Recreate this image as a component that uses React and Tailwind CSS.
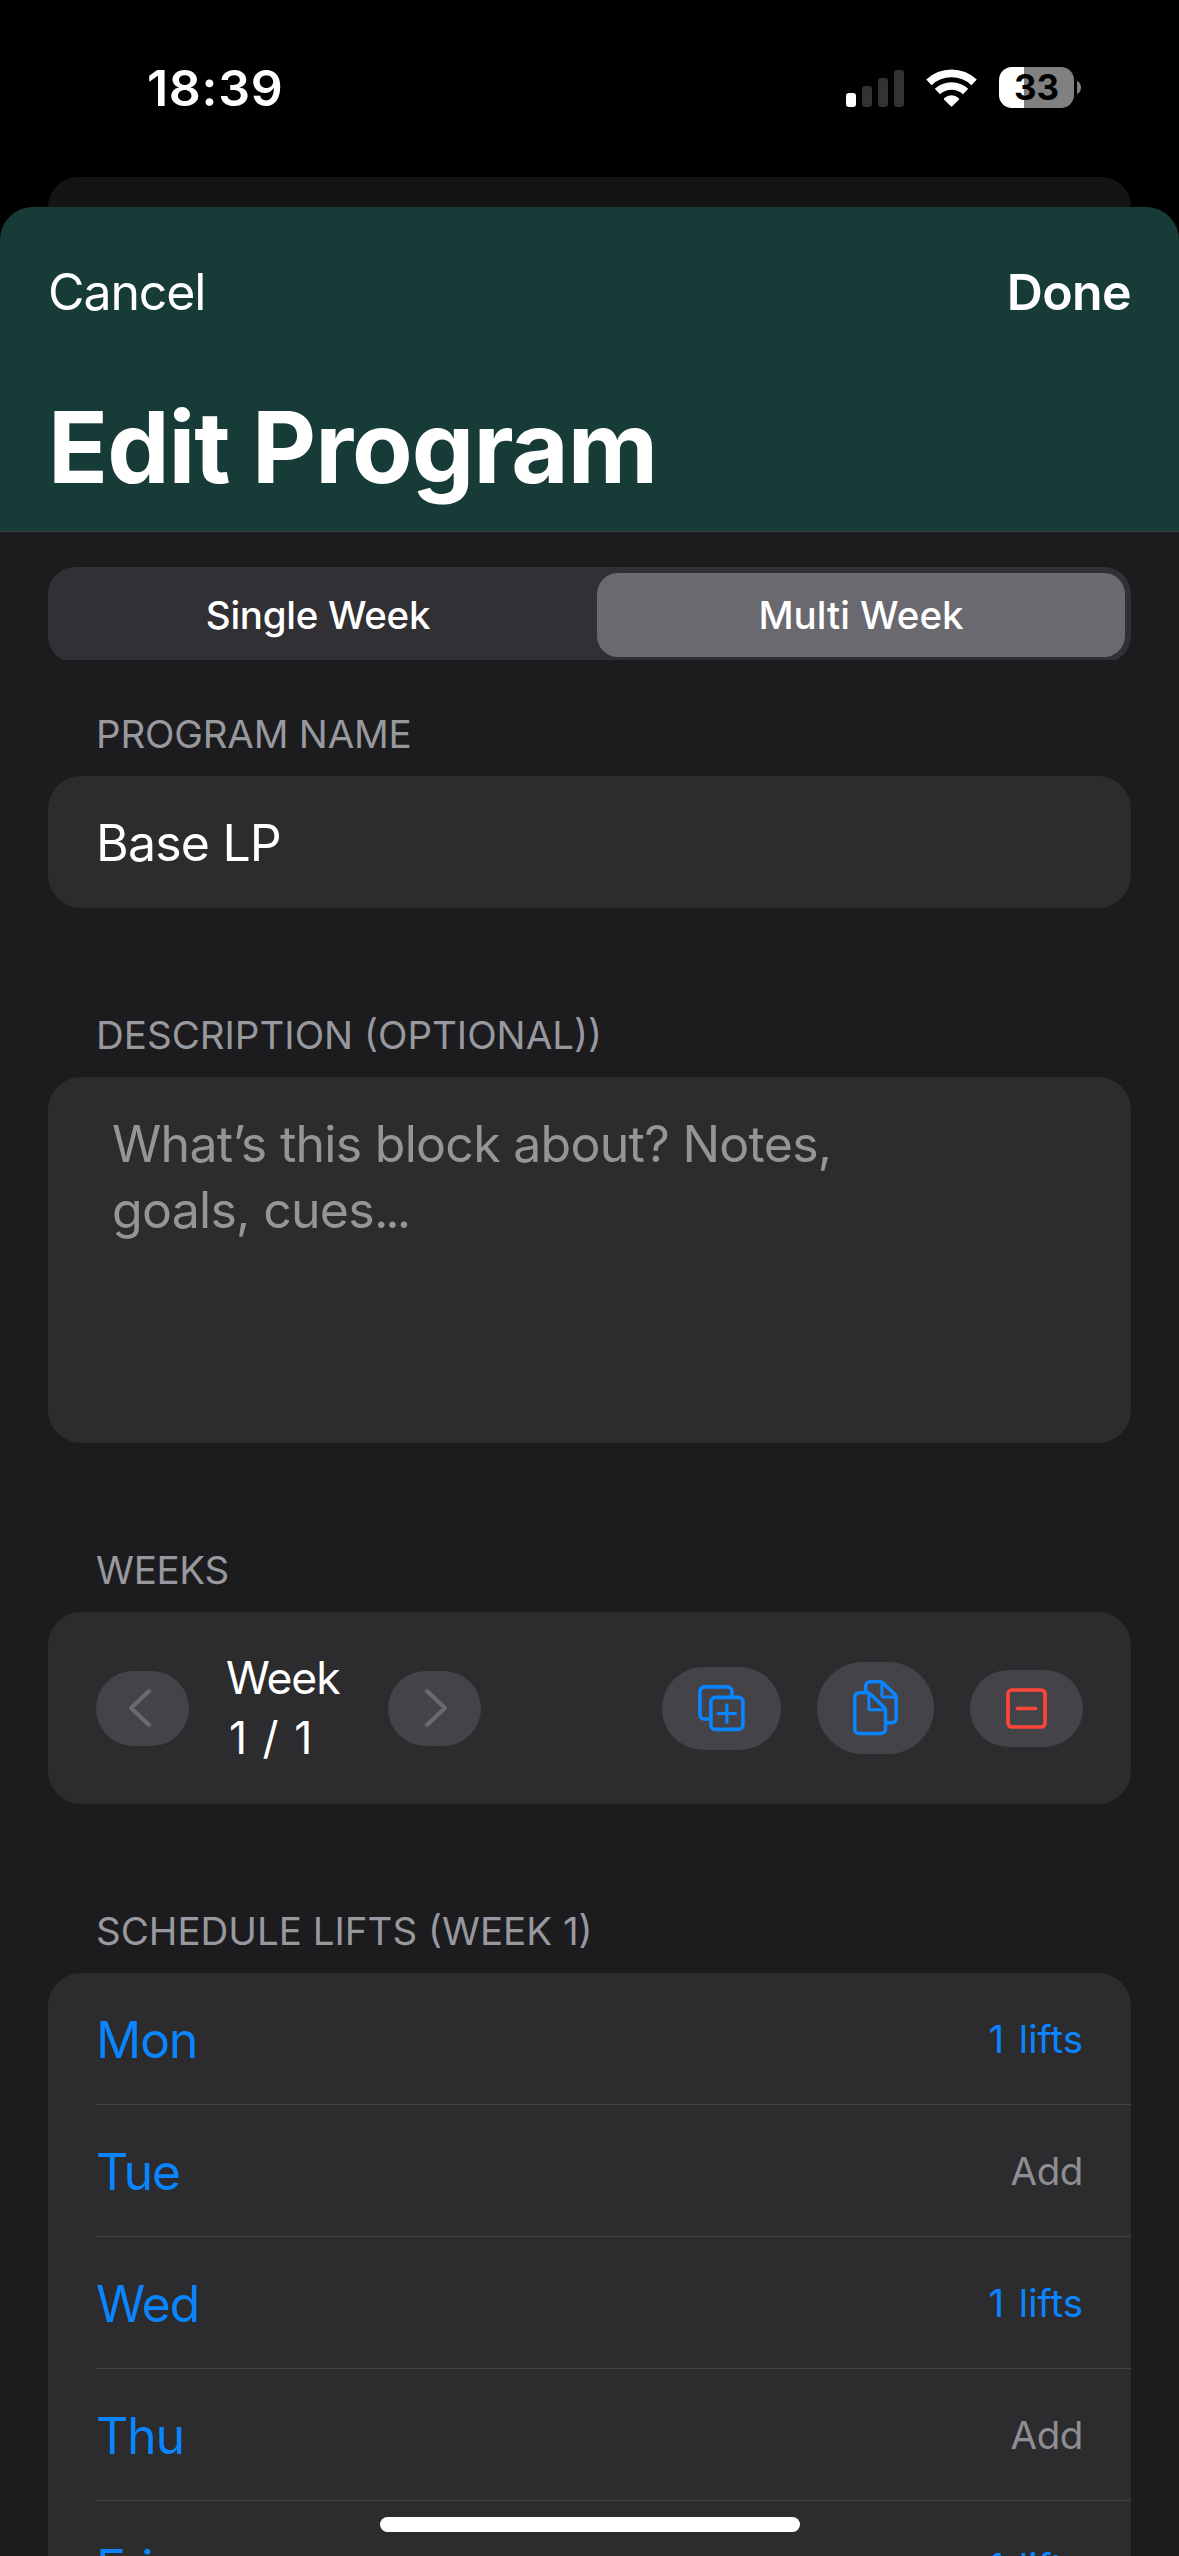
import { useState } from "react";

const days = [
  { name: "Mon", lifts: 1 },
  { name: "Tue", lifts: 0 },
  { name: "Wed", lifts: 1 },
  { name: "Thu", lifts: 0 },
  { name: "Fri", lifts: 1 },
];

const StatusBar = () => {
  return (
    <div className="h-[177px] shrink-0 flex justify-between items-start pl-[147px] pr-[98px]">
      <div className="mt-[58px] h-[60px] leading-[60px] text-[50px] font-semibold tracking-[0.7px]">18:39</div>
      <div className="mt-[67px] flex items-center">
        <div className="flex items-end gap-[6px] h-[37px] mt-[1px]">
          <div className="w-[10px] h-[14px] rounded-[3px] bg-white" />
          <div className="w-[10px] h-[21px] rounded-[3px] bg-[#333333]" />
          <div className="w-[10px] h-[29px] rounded-[3px] bg-[#333333]" />
          <div className="w-[10px] h-[37px] rounded-[3px] bg-[#333333]" />
        </div>
        <svg className="ml-[22px] w-[51px] h-[38px]" viewBox="0 0 51 38" fill="none" stroke="white">
          <path d="M2.9 13.4A33 33 0 0 1 48.1 13.4" strokeWidth="7.8" />
          <path d="M11.4 22.6A20.5 20.5 0 0 1 39.6 22.6" strokeWidth="7.6" />
          <path d="M25.5 36.6L18.9 30A9.6 9.6 0 0 1 32.1 30Z" fill="white" strokeWidth="2" strokeLinejoin="round" />
        </svg>
        <div className="ml-[22px] w-[75px] h-[41px] rounded-[13px] overflow-hidden bg-[linear-gradient(90deg,#fff_25px,#808080_25px)] text-black text-[35px] leading-[41px] font-bold text-center">
          33
        </div>
        <svg className="ml-[3px] w-[4px] h-[13px]" viewBox="0 0 4 13">
          <path d="M0 0C2.6 1 4 3.6 4 6.5S2.6 12 0 13Z" fill="#808080" />
        </svg>
      </div>
    </div>
  );
};

const SectionLabel = ({ children, className }) => (
  <h2 className={`pl-[48px] h-[40px] leading-[40px] text-[38.5px] text-[#98989f] whitespace-nowrap ${className}`}>{children}</h2>
);

const Chevron = ({ d }) => (
  <svg className="w-[22px] h-[38px]" viewBox="0 0 22 38" fill="none" stroke="#6b6b6d" strokeWidth="4" strokeLinecap="round" strokeLinejoin="round">
    <path d={d} />
  </svg>
);

const WeekControls = () => {
  return (
    <div className="mt-[22px] h-[192px] rounded-[33px] bg-[#2c2c2e] px-[48px] flex items-center">
      <button className="w-[93px] h-[75px] rounded-full bg-[#444448] flex items-center justify-center pr-[6px]">
        <Chevron d="M20 2L2 19L20 36" />
      </button>
      <div className="w-[199px] pl-[37px] text-[44.5px] leading-[60px]">
        <div className="tracking-[-1.1px]">Week</div>
        <div className="pl-[3px] [word-spacing:3px]">1 / 1</div>
      </div>
      <button className="w-[93px] h-[75px] rounded-full bg-[#444448] flex items-center justify-center pl-[3px]">
        <Chevron d="M2 2L20 19L2 36" />
      </button>

      <div className="ml-auto flex items-center gap-[36px]">
        <button className="w-[119px] h-[83px] rounded-full bg-[#444448] flex items-center justify-center">
          <svg className="w-[47px] h-[47px]" viewBox="0 0 47 47" fill="none" stroke="#0a84ff" strokeWidth="3.6" strokeLinecap="round">
            <path d="M11 34H6.5A4.6 4.6 0 0 1 1.9 29.4V6.5A4.6 4.6 0 0 1 6.5 1.9H29.4A4.6 4.6 0 0 1 34 6.5V11" strokeLinecap="butt" />
            <rect x="12.9" y="12.4" width="32" height="32" rx="4.4" />
            <path d="M28.8 19.8V37.2M20.1 28.5H37.5" strokeWidth="3.2" />
          </svg>
        </button>
        <button className="w-[117px] h-[92px] rounded-full bg-[#444448] flex items-center justify-center">
          <svg className="w-[45px] h-[56px]" viewBox="0 0 45 56" fill="none" stroke="#0a84ff" strokeWidth="3.5" strokeLinejoin="round">
            <path d="M12.7 12V6.2A4.4 4.4 0 0 1 17.1 1.8H27.2Q28.8 1.8 30 3L42 14.6Q43.2 15.8 43.2 17.5V38.3A4.4 4.4 0 0 1 38.8 42.7H34" />
            <path d="M28.9 2.5V15.6Q28.9 17 30.3 17H43" strokeWidth="3" />
            <path d="M1.8 17.2A4.4 4.4 0 0 1 6.2 12.8H14.5Q16.2 12.8 17.4 14L31.3 27.4Q32.5 28.6 32.5 30.3V49.2A4.4 4.4 0 0 1 28.1 53.6H6.2A4.4 4.4 0 0 1 1.8 49.2Z" />
            <path d="M15.9 13.5V28.3Q15.9 29.7 17.3 29.7H32" strokeWidth="3" />
          </svg>
        </button>
        <button className="w-[113px] h-[77px] rounded-full bg-[#444448] flex items-center justify-center">
          <svg className="w-[41px] h-[41px]" viewBox="0 0 41 41" fill="none" stroke="#ff453a" strokeWidth="3.7" strokeLinecap="round">
            <rect x="2" y="2" width="37" height="37" rx="4" />
            <path d="M11.4 20.5H29.6" strokeWidth="3.6" />
          </svg>
        </button>
      </div>
    </div>
  );
};

const App = () => {
  const [mode, setMode] = useState("multi");

  return (
    <div className="w-[1179px] h-[2556px] overflow-hidden bg-black text-white flex flex-col font-['Inter',sans-serif]">
      <StatusBar />
      <div className="mx-[48px] h-[30px] shrink-0 rounded-t-[30px] bg-[#141414]" />

      <div className="flex-1 min-h-0 flex flex-col rounded-t-[33px] overflow-hidden bg-[#1c1c1e]">
        <header className="h-[325px] shrink-0 bg-[#173b37] border-b border-[#3a4543] px-[48px]">
          <div className="pt-[55px] flex justify-between text-[50px] leading-[60px]">
            <button className="tracking-[-1.1px]">Cancel</button>
            <button className="font-semibold tracking-[-0.6px]">Done</button>
          </div>
          <h1 className="mt-[65px] text-[99px] leading-[120px] font-bold tracking-[-1px]">Edit Program</h1>
        </header>

        <main className="px-[48px] flex flex-col">
          <div className="mt-[35px] h-[93px] overflow-hidden">
            <div className="h-[96px] rounded-[27px] bg-[#313135] p-[6px] grid grid-cols-2 gap-[15px] text-[38.5px] font-medium">
              <button
                onClick={() => setMode("single")}
                className={`pt-[2px] rounded-[21px] tracking-[-0.3px] ${mode === "single" ? "bg-[#6a696f]" : ""}`}
              >
                Single Week
              </button>
              <button onClick={() => setMode("multi")} className={`pt-[2px] rounded-[21px] ${mode === "multi" ? "bg-[#6a696f]" : ""}`}>
                Multi Week
              </button>
            </div>
          </div>

          <SectionLabel className="mt-[54px] tracking-[-0.2px]">PROGRAM NAME</SectionLabel>
          <div className="mt-[22px] h-[132px] rounded-[33px] bg-[#2c2c2e] px-[48px] pt-[2px] flex items-center text-[50px] tracking-[-0.8px]">
            Base LP
          </div>

          <SectionLabel className="mt-[107px]">DESCRIPTION (OPTIONAL))</SectionLabel>
          <div className="mt-[22px] h-[366px] rounded-[33px] bg-[#2c2c2e] pl-[64px] pt-[34px] text-[50px] leading-[66px] tracking-[-0.72px] text-[#959595]">
            What’s this block about? Notes,
            <br />
            goals, cues<span className="tracking-[-3px]">...</span>
          </div>

          <SectionLabel className="mt-[107px] tracking-[-0.3px]">WEEKS</SectionLabel>
          <WeekControls />

          <SectionLabel className="mt-[107px]">SCHEDULE LIFTS (WEEK 1)</SectionLabel>
          <div className="mt-[22px] rounded-t-[33px] bg-[#2c2c2e] pl-[48px]">
            {days.map((day) => (
              <div key={day.name} className="h-[132px] border-b border-[#434345] pt-[3px] pr-[48px] flex items-center justify-between">
                <span className="text-[50px] tracking-[-1.2px] text-[#0a84ff]">{day.name}</span>
                <span className={`text-[38.5px] ${day.lifts ? "text-[#0a84ff] [word-spacing:4px]" : "text-[#8e8e93] tracking-[-0.4px]"}`}>
                  {day.lifts ? `${day.lifts} lifts` : "Add"}
                </span>
              </div>
            ))}
          </div>
        </main>
      </div>

      {/* home indicator */}
      <div className="absolute left-[380px] top-[2517px] w-[420px] h-[15px] rounded-full bg-white" />
    </div>
  );
};

export default App;
